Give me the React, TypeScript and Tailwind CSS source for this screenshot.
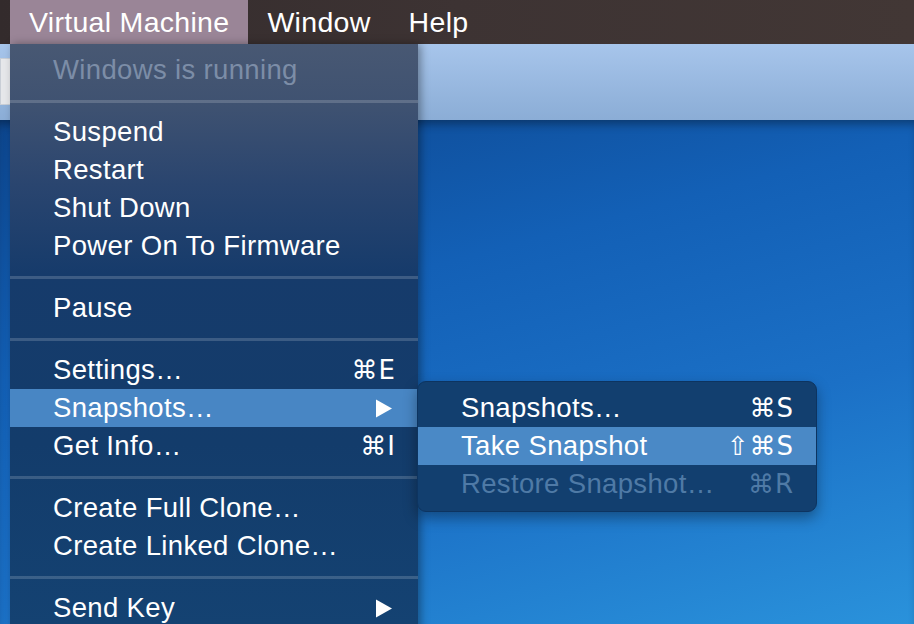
import React from 'react';

type MenuRow =
  | { sep: true }
  | {
      sep?: false;
      label: string;
      shortcut?: string;
      submenu?: boolean;
      disabled?: boolean;
      active?: boolean;
    };

const mainItems: MenuRow[] = [
  { label: 'Windows is running', disabled: true },
  { sep: true },
  { label: 'Suspend' },
  { label: 'Restart' },
  { label: 'Shut Down' },
  { label: 'Power On To Firmware' },
  { sep: true },
  { label: 'Pause' },
  { sep: true },
  { label: 'Settings…', shortcut: '⌘E' },
  { label: 'Snapshots…', submenu: true, active: true },
  { label: 'Get Info…', shortcut: '⌘I' },
  { sep: true },
  { label: 'Create Full Clone…' },
  { label: 'Create Linked Clone…' },
  { sep: true },
  { label: 'Send Key', submenu: true },
];

const snapshotItems: MenuRow[] = [
  { label: 'Snapshots…', shortcut: '⌘S' },
  { label: 'Take Snapshot', shortcut: '⇧⌘S', active: true },
  { label: 'Restore Snapshot…', shortcut: '⌘R', disabled: true },
];

function Arrow() {
  return (
    <svg width="18" height="19" viewBox="0 0 18 19" className="mr-[3px]">
      <path d="M1 0.5 L17 9.5 L1 18.5 Z" fill="white" />
    </svg>
  );
}

function Row({ item, sub }: { item: MenuRow; sub?: boolean }) {
  if (item.sep) {
    return (
      <div className="pt-[11px] pb-[10px]">
        <div className="h-[3px] bg-white/[0.17]" />
      </div>
    );
  }
  const textColor = item.disabled
    ? sub
      ? 'text-[#4f7aa6]'
      : 'text-[#7c8da7]'
    : 'text-white';
  return (
    <div
      className={`flex h-[38px] items-center justify-between pl-[43px] pr-[22px] ${
        item.active ? (sub ? 'bg-[#4a89c6]' : 'bg-[#4886c4]') : ''
      } ${textColor}`}
    >
      <span className="whitespace-nowrap">{item.label}</span>
      {item.shortcut && (
        <span className="whitespace-nowrap font-['DejaVu_Sans','Liberation_Sans',sans-serif] text-[26px] tracking-[1px]">
          {item.shortcut}
        </span>
      )}
      {item.submenu && <Arrow />}
    </div>
  );
}

export default function App() {
  return (
    <div className="relative h-[624px] w-[914px] overflow-hidden font-['Liberation_Sans','DejaVu_Sans',sans-serif] text-[27.5px] leading-none tracking-[0.35px]">
      {/* menu bar */}
      <div className="flex h-[44px] items-stretch bg-[linear-gradient(90deg,#332b2c,#3d3333_50%,#423735)] pl-[10px] text-[28.5px] tracking-[0.3px] text-white">
        <div className="flex items-center bg-[#9a8597] px-[19px]">Virtual Machine</div>
        <div className="flex items-center px-[19px]">Window</div>
        <div className="flex items-center px-[19px]">Help</div>
      </div>

      {/* window toolbar */}
      <div className="flex h-[76px] items-start bg-[linear-gradient(180deg,#a7c5eb,#8badd6)] pt-[14px]">
        <div className="h-[47px] w-[40px] border border-[#c9ced6] bg-[#e6e7ea]" />
      </div>

      {/* desktop */}
      <div className="h-[504px] bg-[linear-gradient(165deg,#0d468e_0%,#1360b6_35%,#1b70c6_65%,#2a92db_100%)] shadow-[inset_0_8px_10px_-4px_rgba(0,0,0,0.35)]" />

      {/* main dropdown */}
      <div className="absolute left-[10px] top-[44px] w-[408px] bg-[linear-gradient(180deg,#485873_0px,#3f5271_60px,#2a456f_140px,#163b6b_230px,#133c6b_400px,#144272_580px)] pt-[7px] pb-[10px] shadow-[3px_0_8px_rgba(0,0,0,0.35)]">
        {mainItems.map((item, i) => (
          <Row key={i} item={item} />
        ))}
      </div>

      {/* snapshots submenu */}
      <div className="absolute left-[417px] top-[381px] w-[400px] overflow-hidden rounded-[9px] border border-[#0d3460] bg-[#123f6f] pt-[7px] pb-[8px] shadow-[0_6px_14px_rgba(0,0,0,0.35)]">
        {snapshotItems.map((item, i) => (
          <Row key={i} item={item} sub />
        ))}
      </div>
    </div>
  );
}
